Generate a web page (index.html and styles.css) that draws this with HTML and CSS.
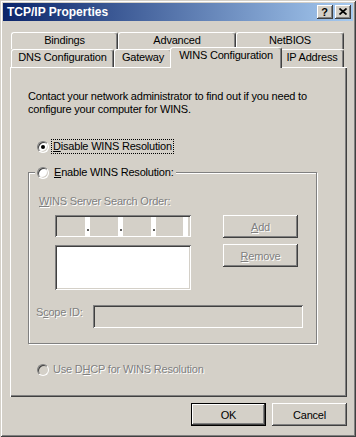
FILE: index.html
```html
<!DOCTYPE html>
<html>
    <head lang="en">
        <meta charset="UTF-8">
        <title>TCP/IP Properties</title>
        <link rel="stylesheet" href="styles.css">
    </head>
    <body>
        <div class="window">
            <div class="titlebar">
                <span class="title">TCP/IP Properties</span>
                <span class="tb-btn help">?</span>
                <span class="tb-btn close">
                    <svg width="8" height="7" viewBox="0 0 8 7"><path d="M0.5 0.5 L7.5 6.5 M7.5 0.5 L0.5 6.5" stroke="#000" stroke-width="1.7" fill="none"/></svg>
                </span>
            </div>
            <div class="client">
                <div class="tabs">
                    <div class="tabrow back">
                        <div class="tab t-bind">Bindings</div>
                        <div class="tab t-adv">Advanced</div>
                        <div class="tab t-nb">NetBIOS</div>
                    </div>
                    <div class="tabrow front">
                        <div class="tab t-dns">DNS Configuration</div>
                        <div class="tab t-gw">Gateway</div>
                        <div class="tab t-wins active">WINS Configuration</div>
                        <div class="tab t-ip">IP Address</div>
                    </div>
                </div>
                <div class="panel">
                    <p class="intro">Contact your network administrator to find out if you need to<br>configure your computer for WINS.</p>
                    <div class="option first">
                        <span class="radio checked"></span>
                        <span class="focus"><u>D</u>isable WINS Resolution</span>
                    </div>
                    <div class="group">
                        <div class="legend">
                            <span class="radio"></span>
                            <span><u>E</u>nable WINS Resolution:</span>
                        </div>
                        <div class="muted label"><u>W</u>INS Server Search Order:</div>
                        <div class="servers">
                            <div class="servers-left">
                                <div class="edit ipbox">
                                    <span class="field"></span><span class="sep"><i></i></span>
                                    <span class="field"></span><span class="sep"><i></i></span>
                                    <span class="field"></span><span class="sep"><i></i></span>
                                    <span class="field last"></span><span class="sep end"></span>
                                </div>
                                <div class="edit listbox"></div>
                            </div>
                            <div class="servers-right">
                                <div class="btn disabled"><span class="muted"><u>A</u>dd</span></div>
                                <div class="btn disabled remove"><span class="muted"><u>R</u>emove</span></div>
                            </div>
                        </div>
                        <div class="scope">
                            <span class="muted scope-label">S<u>c</u>ope ID:</span>
                            <div class="edit scope-edit"></div>
                        </div>
                    </div>
                    <div class="option dhcp">
                        <span class="radio off"></span>
                        <span class="muted">Use D<u>H</u>CP for WINS Resolution</span>
                    </div>
                </div>
                <div class="actions">
                    <div class="btn default">OK</div>
                    <div class="btn">Cancel</div>
                </div>
            </div>
        </div>
    </body>
</html>
```
FILE: styles.css
```css
*{
    margin:0;
    padding:0;
    box-sizing:border-box;
}
body{
    background-color:#d4d0c8;
    font-family:"Liberation Sans", Arial, sans-serif;
    font-size:11px;
    letter-spacing:-0.2px;
    color:#000;
}
u{
    text-decoration:underline;
    text-underline-offset:1px;
}
.window{
    width:356px;
    height:437px;
    padding:3px;
    background-color:#d4d0c8;
    box-shadow:inset 1px 1px #d4d0c8, inset -1px -1px #404040, inset 2px 2px #fff, inset -2px -2px #808080;
}
.titlebar{
    height:18px;
    display:flex;
    align-items:center;
    padding:0 2px 0 4px;
    background:linear-gradient(to right, #0a246a, #a6caf0);
}
.title{
    color:#fff;
    font-weight:bold;
    font-size:12px;
    letter-spacing:0;
}
.tb-btn{
    width:16px;
    height:14px;
    display:flex;
    align-items:center;
    justify-content:center;
    background-color:#d4d0c8;
    box-shadow:inset -1px -1px #404040, inset 1px 1px #fff, inset -2px -2px #808080;
    font-weight:bold;
    font-size:11px;
    letter-spacing:0;
}
.help{
    margin-left:auto;
    padding:0 1px 1px 0;
}
.close{
    margin-left:2px;
    padding:0 1px 1px 0;
}
.client{
    padding:11px 6px 0 7px;
}
.tabrow{
    display:flex;
    padding-left:1px;
}
.tabrow.back{
    height:17px;
}
.tabrow.front{
    height:18px;
}
.tab{
    height:100%;
    border-top:1px solid #fff;
    border-left:1px solid #fff;
    border-right:1px solid #404040;
    border-radius:3px 3px 0 0;
    box-shadow:inset -1px 0 #808080;
    background-color:#d4d0c8;
    text-align:center;
    line-height:13px;
    padding-top:1px;
    white-space:nowrap;
}
.t-bind{ width:107px; }
.t-adv{ width:118px; }
.t-nb{ width:108px; }
.t-dns{ width:103px; }
.t-gw{ width:58px; }
.t-wins{ width:108px; }
.t-ip{ width:64px; }
.tab.active{
    height:21px;
    margin:-2px -2px 0;
    width:112px;
    position:relative;
    z-index:1;
}
.panel{
    height:330px;
    padding:23px 0 0 18px;
    box-shadow:inset 1px 1px #fff, inset -1px -1px #404040, inset -2px -2px #808080;
}
.intro{
    line-height:13px;
}
.option{
    display:flex;
    align-items:center;
    height:13px;
    line-height:13px;
    margin-left:9px;
}
.option.first{
    margin-top:24px;
}
.option .radio{
    margin-right:4px;
}
.focus{
    display:inline-block;
    padding:0 1px;
    margin-left:-1px;
    outline:1px dotted #000;
}
.radio{
    width:12px;
    height:12px;
    flex:none;
    border-radius:50%;
    border:1px solid;
    border-color:#808080 #fff #fff #808080;
    box-shadow:inset 1px 1px #404040, inset -1px -1px #d4d0c8;
    background-color:#fff;
    position:relative;
}
.radio.checked::after{
    content:"";
    position:absolute;
    left:3px;
    top:3px;
    width:4px;
    height:4px;
    border-radius:50%;
    background-color:#000;
}
.radio.off{
    background-color:#d4d0c8;
}
.muted{
    color:#808080;
    text-shadow:1px 1px #fff;
}
.group{
    position:relative;
    width:289px;
    height:172px;
    margin-top:19px;
    padding:22px 0 0 10px;
    border:1px solid #808080;
    box-shadow:inset 1px 1px #fff, 1px 1px #fff;
}
.legend{
    position:absolute;
    top:-7px;
    left:6px;
    display:flex;
    align-items:center;
    height:13px;
    line-height:13px;
    padding:0 2px;
    background-color:#d4d0c8;
}
.legend .radio{
    margin-right:5px;
}
.label{
    line-height:13px;
}
.servers{
    display:flex;
    margin-top:7px;
    padding-left:16px;
}
.servers-left{
    width:136px;
}
.servers-right{
    margin-left:32px;
}
.edit{
    box-shadow:inset 1px 1px #808080, inset -1px -1px #fff, inset 2px 2px #404040, inset -2px -2px #d4d0c8;
}
.ipbox{
    height:22px;
    display:flex;
    padding:2px 2px 1px 2px;
    background-color:#d4d0c8;
}
.field{
    width:28px;
}
.field.last{
    width:27px;
}
.sep{
    width:5px;
    background-color:#fff;
    position:relative;
}
.sep i{
    position:absolute;
    left:2px;
    top:12px;
    width:2px;
    height:2px;
    background-color:#606060;
}
.listbox{
    height:45px;
    margin-top:8px;
    background-color:#fff;
}
.btn{
    width:75px;
    height:23px;
    display:flex;
    align-items:center;
    justify-content:center;
    background-color:#d4d0c8;
    box-shadow:inset -1px -1px #404040, inset 1px 1px #fff, inset -2px -2px #808080;
}
.btn.remove{
    margin-top:6px;
}
.btn.default{
    border:1px solid #000;
}
.scope{
    display:flex;
    align-items:flex-start;
    margin:15px 0 0 -3px;
}
.scope-label{
    width:57px;
    line-height:13px;
    margin-top:1px;
}
.scope-edit{
    width:210px;
    height:23px;
    background-color:#d4d0c8;
}
.option.dhcp{
    margin-top:19px;
}
.actions{
    display:flex;
    justify-content:flex-end;
    gap:6px;
    margin-top:6px;
}
```
